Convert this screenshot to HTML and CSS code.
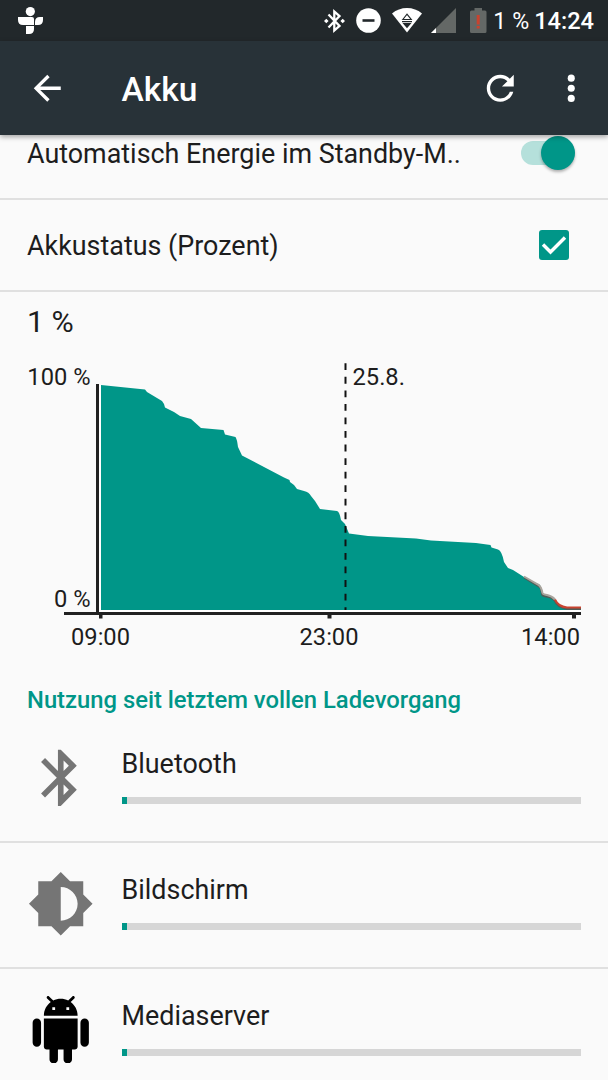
FILE: index.html
```html
<!DOCTYPE html>
<html lang="de">
<head>
    <meta charset="UTF-8">
    <meta name="viewport" content="width=device-width, initial-scale=1.0">
    <title>Akku</title>
    <link rel="stylesheet" href="styles.css">
</head>
<body>
    <div class="status-bar">
        <svg class="notification" width="26" height="28" viewBox="0 0 26 28">
            <circle cx="12.3" cy="4.6" r="4.6"/>
            <path d="M0 10h14q2 0 2 2v6H5q-5 0-5-5zM25 10v3q0 5-5 5h-3v-3q0-5 5-5zM8 19h8v3q0 5-5 5H8z"/>
        </svg>
        <svg class="bluetooth" width="22" height="26" viewBox="0 0 22 26">
            <path class="stroke" d="M4.5 6.5l11 11.4-5.2 4.6v-19l5.2 4.6L4.5 19.5"/>
            <path d="M2.3 10.7L4.6 13l-2.3 2.3L0 13zM18.7 10.7L21 13l-2.3 2.3-2.3-2.3z"/>
        </svg>
        <svg class="dnd" width="25" height="25" viewBox="0 0 25 25">
            <circle cx="12.5" cy="12.5" r="12.3"/>
            <path class="cut" d="M6.5 11.2h12v2.6h-12z"/>
        </svg>
        <svg class="wifi" width="30" height="25" viewBox="0 0 30 25">
            <path d="M0 5.5Q6.5 0 15 0t15 5.5L15 24.5z"/>
            <path class="cut-line" d="M10.8 11.5L15 6.2l4.2 5.3z"/>
            <path class="cut" d="M10 13h10v1.2H10zM10.5 15h9L15 20.2z"/>
        </svg>
        <svg class="signal" width="25" height="25" viewBox="0 0 25 25">
            <path class="dim" d="M25 0v25H0z"/>
            <path d="M5 20v5H0z"/>
        </svg>
        <svg class="battery" width="17" height="25" viewBox="0 0 17 25">
            <path class="dim" d="M4.5 0H12v2.500h3q1.500 0 1.500 1.500v19.500q0 1.500-1.500 1.500H1.500Q0 25 0 23.500V4q0-1.500 1.500-1.500h3z"/>
            <path class="alert" d="M6.700 7h3v9.500h-3zM6.700 18h3v2.500h-3z"/>
        </svg>
        <span class="percent">1 %</span>
        <span class="clock">14:24</span>
    </div>

    <div class="app-bar">
        <svg class="icon" viewBox="0 0 24 24"><path d="M20 11H7.83l5.59-5.59L12 4l-8 8 8 8 1.41-1.41L7.83 13H20v-2z"/></svg>
        <h1 class="title">Akku</h1>
        <svg class="icon" viewBox="0 0 24 24"><path d="M17.65 6.35C16.2 4.9 14.21 4 12 4c-4.42 0-7.99 3.58-7.99 8s3.57 8 7.99 8c3.73 0 6.84-2.55 7.73-6h-2.08c-.82 2.33-3.04 4-5.65 4-3.31 0-6-2.69-6-6s2.69-6 6-6c1.66 0 3.14.69 4.22 1.78L13 11h7V4l-2.35 2.35z"/></svg>
        <svg class="icon more" viewBox="0 0 24 24"><circle cx="12" cy="6" r="2.1"/><circle cx="12" cy="12" r="2.1"/><circle cx="12" cy="18" r="2.1"/></svg>
    </div>

    <div class="setting standby">
        <span>Automatisch Energie im Standby-M..</span>
        <div class="switch"><div class="thumb"></div></div>
    </div>
    <div class="setting percentage">
        <span>Akkustatus (Prozent)</span>
        <div class="checkbox">
            <svg width="30" height="30" viewBox="0 0 30 30"><path d="M4 14.500l7.500 7.500L26 7.500"/></svg>
        </div>
    </div>

    <div class="level">1 %</div>

    <svg class="chart" width="608" height="310" viewBox="0 350 608 310">
        <path class="backing" d="M99 385h3v225h479v2H99z"/>
        <path class="area" d="M101 385L145 389.5 147 392 162 401Q164 403 165 407.5L174 412 180 416 191 419 201 428 223.5 430 225 434.5 235.5 437Q237 439 238 447L242 455.5 284 477.5 289.5 480 290 482 294 485 297 489 304 491Q309 492 311 496L315 501 320 509 337 511Q339.5 511.5 341 520L345 524 349 533.5 368 536 416 538.5 431 540.5 476 543 490.5 545 491.5 547.5 498 549.5Q502 551 504 562L508 568 513 570 524 577 540 585 543 594.5 552 597 558 604 567 608H581V610H101z"/>
        <path class="line-shade" d="M524 577.5L539 586.500Q541 587 542 594 542 596 546 596.5 552 597 555 601 557 607 567 609H581"/>
        <path class="line-warn" d="M524 576.5L538 584.500Q541 586 542.5 593 543 594.5 547 595 552 596 555 599.5"/>
        <path class="line-critical" d="M555 599.5Q558 606.5 567 607.5H581"/>
        <path class="day" d="M345.5 363.3V610"/>
        <path class="axis" d="M96 384h3v228h482v3h-5v3.500h-4V615H331.5v3.500h-4V615H102.5v3.500h-3.500V615H64v-3h32z"/>
        <text x="90.5" y="384.5" text-anchor="end">100 %</text>
        <text x="90.5" y="607" text-anchor="end">0 %</text>
        <text x="352.5" y="384.5">25.8.</text>
        <text x="100.5" y="645" text-anchor="middle">09:00</text>
        <text x="329" y="645" text-anchor="middle">23:00</text>
        <text x="580" y="645" text-anchor="end">14:00</text>
    </svg>

    <h2 class="section-title">Nutzung seit letztem vollen Ladevorgang</h2>

    <div class="usage">
        <svg class="usage-icon" viewBox="0 0 24 24"><path d="M17.71 7.71L12 2h-1v7.59L6.41 5 5 6.41 10.59 12 5 17.59 6.41 19 11 14.41V22h1l5.71-5.71-4.3-4.29 4.3-4.29zM13 5.83l1.88 1.88L13 9.59V5.83zm1.88 10.46L13 18.17v-3.76l1.88 1.88z"/></svg>
        <div class="usage-info">
            <div class="usage-name">Bluetooth</div>
            <div class="bar"><div class="bar-fill" style="width: 1.2%"></div></div>
        </div>
    </div>
    <div class="usage">
        <svg class="usage-icon" viewBox="0 0 24 24"><path d="M20 15.31L23.31 12 20 8.69V4h-4.69L12 .69 8.69 4H4v4.69L.69 12 4 15.31V20h4.69L12 23.31 15.31 20H20v-4.69zM12 18V6c3.31 0 6 2.69 6 6s-2.69 6-6 6z"/></svg>
        <div class="usage-info">
            <div class="usage-name">Bildschirm</div>
            <div class="bar"><div class="bar-fill" style="width: 1.2%"></div></div>
        </div>
    </div>
    <div class="usage">
        <svg class="usage-icon android" viewBox="0 0 24 24"><path d="M6 18c0 .55.45 1 1 1h1v3.5c0 .83.67 1.5 1.5 1.5s1.5-.67 1.5-1.5V19h2v3.5c0 .83.67 1.5 1.5 1.5s1.5-.67 1.5-1.5V19h1c.55 0 1-.45 1-1V8H6v10zM3.5 8C2.67 8 2 8.67 2 9.5v7c0 .83.67 1.5 1.5 1.5S5 17.33 5 16.5v-7C5 8.67 4.33 8 3.5 8zm17 0c-.83 0-1.5.67-1.5 1.5v7c0 .83.67 1.5 1.5 1.5s1.5-.67 1.5-1.5v-7c0-.83-.67-1.5-1.5-1.5zm-4.97-5.84l1.3-1.3c.2-.2.2-.51 0-.71-.2-.2-.51-.2-.71 0l-1.48 1.48C13.85 1.23 12.95 1 12 1c-.96 0-1.86.23-2.66.63L7.85.15c-.2-.2-.51-.2-.71 0-.2.2-.2.51 0 .71l1.31 1.31C6.97 3.26 6 5.01 6 7h12c0-1.99-.97-3.75-2.47-4.84zM10 5H9V4h1v1zm5 0h-1V4h1v1z"/></svg>
        <div class="usage-info">
            <div class="usage-name">Mediaserver</div>
            <div class="bar"><div class="bar-fill" style="width: 1.2%"></div></div>
        </div>
    </div>
</body>
</html>
```
FILE: styles.css
```css
:root {
    --bg-color: #fafafa;
    --status-bg: #22282b;
    --bar-bg: #283238;
    --text-color: #1d1d1d;
    --accent-color: #009688;
    --divider: #e0e0e0;
}

* {
    box-sizing: border-box;
}

body {
    background-color: var(--bg-color);
    color: var(--text-color);
    margin: 0;
    height: 1080px;
    overflow: hidden;
    font-family: Roboto, "Liberation Sans", sans-serif;
    font-size: 26.9px;
}

svg {
    display: block;
    flex-shrink: 0;
}

/* Status bar */
.status-bar {
    background-color: var(--status-bg);
    color: #ffffff;
    fill: #ffffff;
    display: flex;
    align-items: center;
    height: 41px;
    padding: 0 14px 0 18px;
    font-size: 23.6px;
    white-space: nowrap;
}

.notification {
    margin-right: auto;
}

.stroke {
    fill: none;
    stroke: #ffffff;
    stroke-width: 2.3;
}

.dnd {
    margin-left: 10px;
}

.wifi {
    margin-left: 11px;
}

.signal {
    margin-left: 9px;
}

.battery {
    margin-left: 14px;
}

.cut {
    fill: var(--status-bg);
}

.cut-line {
    fill: none;
    stroke: var(--status-bg);
    stroke-width: 1.2;
}

.dim {
    fill: #646866;
}

.alert {
    fill: #c8432f;
}

.percent {
    margin-left: 6px;
    font-size: 23.2px;
}

.clock {
    margin-left: 5px;
    font-weight: 500;
}

/* App bar */
.app-bar {
    background-color: var(--bar-bg);
    color: #ffffff;
    fill: #ffffff;
    display: flex;
    align-items: center;
    height: 94px;
    padding: 0 17px 0 27px;
    position: relative;
    box-shadow: 0 2px 5px rgba(0, 0, 0, 0.35);
}

.icon {
    width: 40.5px;
    height: 40.5px;
}

.title {
    flex: 1;
    margin: 0 0 0 54px;
    padding-top: 2px;
    font-size: 33.5px;
    font-weight: 500;
}

.more {
    margin-left: 30px;
}

/* Settings */
.setting {
    display: flex;
    align-items: center;
    justify-content: space-between;
    height: 92px;
    padding: 0 39px 0 27px;
    border-bottom: 2px solid var(--divider);
}

.standby {
    height: 65px;
    padding: 0 33px 26px 27px;
}

.percentage span {
    padding-top: 2px;
}

.switch {
    width: 54px;
    height: 24px;
    margin-bottom: 2px;
    border-radius: 12px;
    background-color: #b5e0db;
    display: flex;
    align-items: center;
    justify-content: flex-end;
}

.thumb {
    width: 34px;
    height: 34px;
    border-radius: 50%;
    background-color: var(--accent-color);
    box-shadow: 0 2px 3px rgba(0, 0, 0, 0.3);
}

.checkbox {
    width: 30px;
    height: 30px;
    margin-bottom: 1px;
    border-radius: 3px;
    background-color: var(--accent-color);
}

.checkbox path {
    fill: none;
    stroke: #ffffff;
    stroke-width: 3.4;
}

/* Battery history */
.level {
    height: 58px;
    padding-left: 27px;
    font-size: 30.3px;
    line-height: 60px;
}

.chart text {
    font-size: 23.7px;
    fill: var(--text-color);
}

.backing {
    fill: #ffffff;
}

.area {
    fill: var(--accent-color);
}

.axis {
    fill: #212121;
}

.day {
    stroke: #111111;
    stroke-width: 2;
    stroke-dasharray: 6.8 6.75;
}

.line-shade,
.line-warn,
.line-critical {
    fill: none;
    stroke-width: 2;
}

.line-shade {
    stroke: #4f5d58;
}

.line-warn {
    stroke: #a9a49d;
}

.line-critical {
    stroke: #c8432f;
}

/* Usage list */
.section-title {
    margin: 0;
    height: 57px;
    padding: 23px 27px 0;
    font-size: 23.8px;
    font-weight: 500;
    line-height: 34px;
    color: var(--accent-color);
}

.usage {
    display: flex;
    height: 126px;
    padding: 26.5px 27px 0;
    border-bottom: 2px solid var(--divider);
}

.usage-icon {
    width: 67.5px;
    height: 67.5px;
    fill: #757575;
}

.android {
    fill: #000000;
}

.usage-info {
    flex: 1;
    margin-left: 27px;
}

.usage-name {
    height: 53.5px;
    line-height: 41px;
}

.bar {
    height: 7px;
    background-color: #d6d6d6;
}

.bar-fill {
    height: 100%;
    background-color: var(--accent-color);
}
```
